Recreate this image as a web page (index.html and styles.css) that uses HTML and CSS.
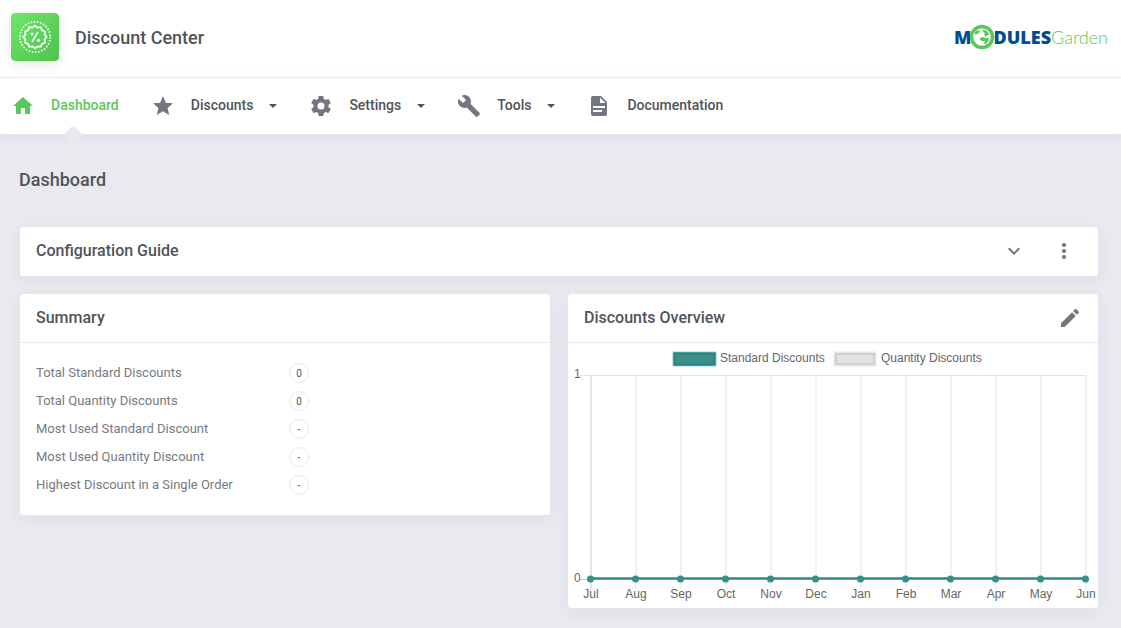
FILE: index.html
```html
<!DOCTYPE html>
<html lang="en">
<head>
<meta charset="utf-8">
<meta name="viewport" content="width=device-width, initial-scale=1">
<title>Discount Center</title>
<link rel="stylesheet" href="styles.css">
</head>
<body>
<header class="top">
  <svg class="app-icon" viewBox="0 0 48 48" aria-hidden="true">
    <defs><linearGradient id="green" x1="0" y1="0" x2="1" y2="1"><stop offset="0" stop-color="#6ee66c"/><stop offset="1" stop-color="#4fc24c"/></linearGradient></defs>
    <rect width="48" height="48" rx="4" fill="url(#green)"/>
    <circle cx="24" cy="24" r="15.2" fill="none" stroke="#fff" stroke-width="1.7" stroke-dasharray="1.5 1.684"/>
    <path d="M24 13.500l2.800 2.300 3.600-.5 1.300 3.400 3.400 1.300-.5 3.600 2.300 2.400-2.300 2.800.5 3.600-3.400 1.300-1.300 3.400-3.600-.5-2.800 2.300-2.800-2.300-3.600.5-1.300-3.400-3.400-1.300.5-3.600-2.300-2.800 2.300-2.400-.5-3.600 3.400-1.300 1.300-3.400 3.600.5z" transform="translate(2.400 .500) scale(.9)" fill="none" stroke="#fff" stroke-width="1.900"/>
    <path d="M27 19l-6 10" stroke="#fff" stroke-width="1.5"/>
    <circle cx="21" cy="21" r="1.5" fill="#fff"/><circle cx="27.500" cy="27.300" r="1.500" fill="#fff"/>
  </svg>
  <h1 class="app-title">Discount Center</h1>
  <a class="brand" href="#" aria-label="ModulesGarden">
    <span class="brand-bold">M</span>
    <svg class="globe" viewBox="0 0 26 26" aria-hidden="true">
      <circle cx="13" cy="13" r="10.500" fill="#fff" stroke="#5bc65a" stroke-width="3.500"/>
      <path d="M6 8l3-2 2 1-1 2-2 1-2 1zM14 5.500l4 1.500 2.500 4-2.500 0-1 2-2-2 1-2-2-1zM11 14l3-1 2 1 3 0 1 2-3 4-2 0 1-3-3 0-2-1z" fill="#5bc65a"/>
    </svg>
    <span class="brand-bold">DULES</span><span class="brand-light">Garden</span>
  </a>
</header>
<nav class="nav">
  <a class="nav-item active" href="#">
    <svg class="icon" viewBox="0 0 24 24" aria-hidden="true"><path d="M10 20v-6h4v6h5v-8h3L12 3 2 12h3v8z"/></svg>
    <span class="label">Dashboard</span>
  </a>
  <a class="nav-item" href="#">
    <svg class="icon" viewBox="0 0 24 24" aria-hidden="true"><path d="M12 17.270L18.180 21l-1.640-7.030L22 9.240l-7.190-.61L12 2 9.190 8.630 2 9.240l5.460 4.730L5.820 21z"/></svg>
    <span class="label">Discounts</span><i class="caret"></i>
  </a>
  <a class="nav-item" href="#">
    <svg class="icon" viewBox="0 0 24 24" aria-hidden="true"><path d="M12 15.500A3.500 3.500 0 0 1 8.500 12 3.500 3.500 0 0 1 12 8.500a3.500 3.500 0 0 1 3.500 3.500 3.500 3.500 0 0 1-3.500 3.500m7.430-2.530c.04-.32.07-.64.07-.97s-.03-.66-.07-1l2.110-1.630c.19-.15.24-.42.12-.64l-2-3.460c-.12-.22-.39-.3-.61-.22l-2.490 1c-.52-.39-1.060-.73-1.690-.98l-.37-2.650A.506.506 0 0 0 14 2h-4c-.25 0-.46.18-.5.42l-.37 2.650c-.63.25-1.170.59-1.690.98l-2.490-1c-.22-.08-.49 0-.61.22l-2 3.460c-.13.22-.07.49.12.64L4.570 11c-.04.34-.07.67-.07 1s.03.65.07.97l-2.110 1.660c-.19.15-.25.42-.12.64l2 3.460c.12.22.39.3.61.22l2.490-1.010c.52.4 1.060.74 1.690.99l.37 2.650c.04.24.25.42.5.42h4c.25 0 .46-.18.5-.42l.37-2.650c.63-.26 1.170-.59 1.690-.99l2.490 1.010c.22.08.49 0 .61-.22l2-3.460c.12-.22.07-.49-.12-.64z"/></svg>
    <span class="label">Settings</span><i class="caret"></i>
  </a>
  <a class="nav-item" href="#">
    <svg class="icon" viewBox="0 0 24 24" aria-hidden="true"><path d="M22.700 19l-9.100-9.100c.9-2.300.4-5-1.500-6.900-2-2-5-2.400-7.400-1.300L9 6 6 9 1.600 4.700C.4 7.100.9 10.100 2.900 12.100c1.900 1.900 4.600 2.400 6.900 1.500l9.100 9.100c.4.4 1 .4 1.400 0l2.300-2.300c.5-.4.5-1.100.1-1.400z"/></svg>
    <span class="label">Tools</span><i class="caret"></i>
  </a>
  <a class="nav-item" href="#">
    <svg class="icon" viewBox="0 0 24 24" aria-hidden="true"><path d="M13 9h5.500L13 3.500V9M6 2h8l6 6v12a2 2 0 0 1-2 2H6a2 2 0 0 1-2-2V4c0-1.110.89-2 2-2m9 16v-2H6v2h9m3-4v-2H6v2z"/></svg>
    <span class="label">Documentation</span>
  </a>
</nav>
<main class="content">
  <h2 class="page-title">Dashboard</h2>
  <section class="card guide">
    <div class="card-head">
      <h3>Configuration Guide</h3>
      <div class="actions">
        <button class="icon-btn" aria-label="Expand"><svg class="icon" viewBox="0 0 24 24"><path d="M7.410 8.590L12 13.170l4.590-4.580L18 10l-6 6-6-6z"/></svg></button>
        <button class="icon-btn" aria-label="More options"><svg class="icon" viewBox="0 0 24 24"><circle cx="12" cy="6" r="2.100"/><circle cx="12" cy="12" r="2.100"/><circle cx="12" cy="18" r="2.100"/></svg></button>
      </div>
    </div>
  </section>
  <div class="columns">
    <section class="card">
      <div class="card-head"><h3>Summary</h3></div>
      <dl class="summary">
        <div class="row"><dt>Total Standard Discounts</dt><dd><span class="badge">0</span></dd></div>
        <div class="row"><dt>Total Quantity Discounts</dt><dd><span class="badge">0</span></dd></div>
        <div class="row"><dt>Most Used Standard Discount</dt><dd><span class="badge">-</span></dd></div>
        <div class="row"><dt>Most Used Quantity Discount</dt><dd><span class="badge">-</span></dd></div>
        <div class="row"><dt>Highest Discount in a Single Order</dt><dd><span class="badge">-</span></dd></div>
      </dl>
    </section>
    <section class="card">
      <div class="card-head">
        <h3>Discounts Overview</h3>
        <button class="icon-btn" aria-label="Edit"><svg class="icon" viewBox="0 0 24 24"><path d="M20.710 7.040c.39-.39.39-1.040 0-1.410l-2.340-2.340c-.37-.39-1.020-.39-1.410 0l-1.840 1.830 3.750 3.750M3 17.250V21h3.750L17.810 9.930l-3.750-3.750z"/></svg></button>
      </div>
      <svg class="chart" viewBox="0 0 530 265" role="img" aria-label="Discounts Overview chart">
        <rect x="105" y="9" width="43" height="14" fill="#3b908e" stroke="#a5d0cf"/>
        <rect x="106.500" y="10.500" width="40" height="11" fill="none" stroke="#278583" stroke-width="2"/>
        <text x="152" y="19">Standard Discounts</text>
        <rect x="265.500" y="8.500" width="43" height="15" fill="#e8e8e8"/>
        <rect x="268" y="11" width="38" height="10" fill="#e3e3e3" stroke="#d0d0d0" stroke-width="2"/>
        <text x="313" y="19">Quantity Discounts</text>
        <path class="grid" d="M12 32.500H518M68 32V246M113 32V246M158 32V246M203 32V246M248 32V246M293 32V246M338 32V246M383 32V246M428 32V246M473 32V246M518 32V246"/>
        <path class="axis" d="M23 32V246M12 236.500H518"/>
        <text x="6" y="35">1</text>
        <text x="6" y="239">0</text>
        <path class="halo" d="M22 235.500H517"/>
        <path class="series" d="M22 235.500H517"/>
        <g class="points"><circle cx="22.500" cy="236" r="3.500"/><circle cx="67.500" cy="236" r="3.500"/><circle cx="112.500" cy="236" r="3.500"/><circle cx="157.500" cy="236" r="3.500"/><circle cx="202.500" cy="236" r="3.500"/><circle cx="247.500" cy="236" r="3.500"/><circle cx="292.500" cy="236" r="3.500"/><circle cx="337.500" cy="236" r="3.500"/><circle cx="382.500" cy="236" r="3.500"/><circle cx="427.500" cy="236" r="3.500"/><circle cx="472.500" cy="236" r="3.500"/><circle cx="517.500" cy="236" r="3.500"/></g>
        <g class="months"><text x="23" y="255">Jul</text><text x="68" y="255">Aug</text><text x="113" y="255">Sep</text><text x="158" y="255">Oct</text><text x="203" y="255">Nov</text><text x="248" y="255">Dec</text><text x="293" y="255">Jan</text><text x="338" y="255">Feb</text><text x="383" y="255">Mar</text><text x="428" y="255">Apr</text><text x="473" y="255">May</text><text x="518" y="255">Jun</text></g>
      </svg>
    </section>
  </div>
</main>
</body>
</html>
```
FILE: styles.css
```css
* { box-sizing: border-box; }
body {
  margin: 0;
  min-height: 100vh;
  background: #e9eaf0;
  color: #505459;
  font-family: Roboto, "Liberation Sans", sans-serif;
  font-size: 14px;
}
h1, h2, h3 { margin: 0; font-weight: 500; }
dl, dd { margin: 0; }
a { color: inherit; text-decoration: none; }
.top {
  display: flex;
  align-items: center;
  padding: 13px 13px 16px 11px;
  background: #fff;
  border-bottom: 1px solid #eeeff2;
}
.app-icon {
  width: 48px;
  height: 48px;
  border-radius: 4px;
  box-shadow: 0 3px 12px rgba(0, 0, 0, .1);
}
.app-title { margin-left: 16px; padding-top: 2px; font-size: 18px; line-height: 24px; }
.brand { display: flex; align-items: center; margin-left: auto; line-height: 26px; }
.brand-bold { color: #004b91; font: 800 18px/26px "Open Sans", sans-serif; }
.brand-light { color: #5bc65a; font: 300 18px/26px Lato, sans-serif; }
.globe { width: 26px; height: 26px; margin: 0 -2px; }
.nav {
  display: flex;
  gap: 32px;
  height: 56px;
  padding: 0 11px;
  background: #fff;
  box-shadow: 0 2px 12px rgba(60, 65, 85, .08);
}
.nav-item {
  position: relative;
  display: flex;
  align-items: center;
  gap: 16px;
  font-weight: 500;
}
.label { padding-bottom: 2px; }
.active { color: #5bc85c; }
.active::after {
  content: "";
  position: absolute;
  left: calc(50% + 8px);
  bottom: -8px;
  width: 14px;
  height: 14px;
  background: #e9eaf0;
  border-radius: 3px 0 0 0;
  transform: translateX(-50%) rotate(45deg);
}
.icon { display: block; width: 24px; height: 24px; fill: #737680; }
.active .icon { fill: currentColor; }
.caret {
  width: 8px;
  border: 4px solid transparent;
  border-top-color: #505459;
  border-bottom: 0;
}
.content { padding: 32px 22px 19px 19px; }
.page-title { font-size: 18px; line-height: 28px; margin-bottom: 32px; }
.card {
  background: #fff;
  border: 1px solid #e6e7ed;
  border-radius: 4px;
  box-shadow: 0 4px 14px rgba(60, 65, 85, .06);
}
.guide { margin-bottom: 16px; }
.card-head {
  display: flex;
  align-items: center;
  justify-content: space-between;
  height: 49px;
  padding: 0 16px 2px;
}
.columns .card-head { padding-bottom: 0; border-bottom: 1px solid #e9eaf0; }
.card-head h3 { font-size: 16px; line-height: 24px; }
.actions { display: flex; gap: 26px; padding-right: 6px; }
.icon-btn { padding: 0; border: 0; background: none; cursor: pointer; }
.columns { display: grid; grid-template-columns: 1fr 1fr; gap: 16px; align-items: start; }
.summary { padding: 16px; font-size: 13px; color: #777a80; }
.row {
  display: grid;
  grid-template-columns: 1fr 1fr;
  gap: 8px;
  align-items: center;
  height: 28px;
}
.row dt { padding-bottom: 2px; }
.badge {
  display: flex;
  align-items: center;
  justify-content: center;
  width: 20px;
  height: 20px;
  border: 1px solid #e9eaf0;
  border-radius: 50%;
  color: #505459;
  font-size: 10px;
}
.chart { display: block; width: 100%; }
.chart text { fill: #666; font: 12px "Liberation Sans", Arial, sans-serif; }
.months { text-anchor: middle; }
.grid { stroke: #e5e5e5; fill: none; }
.axis { stroke: #c8c8c8; fill: none; }
.halo { stroke: #a5d0cf; stroke-width: 3; }
.series { stroke: #278583; stroke-width: 2; }
.points { fill: #33908d; }
```
